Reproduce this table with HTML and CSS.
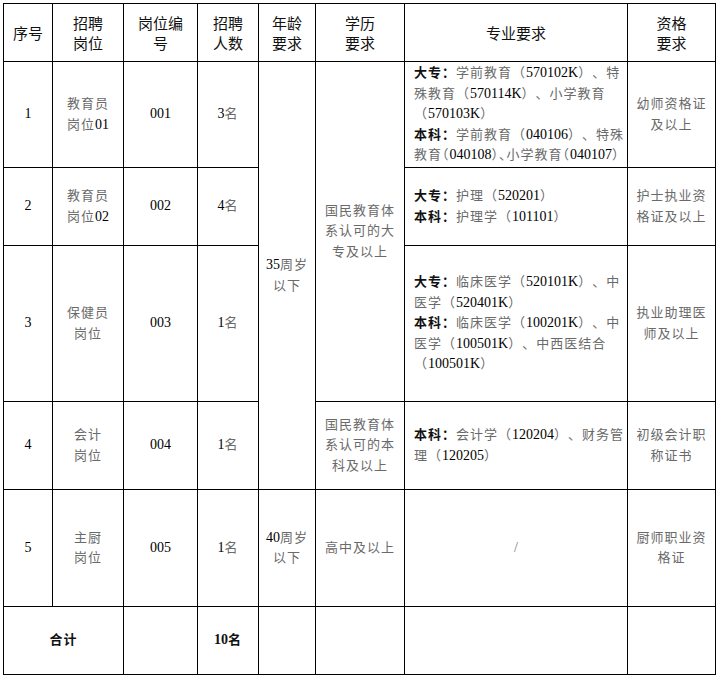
FILE: index.html
```html
<!DOCTYPE html>
<html lang="zh-CN">
<head>
<meta charset="utf-8">
<title>招聘岗位表</title>
<link rel="stylesheet" href="styles.css">
</head>
<body>
<table class="jobs">
  <colgroup>
    <col class="w-no"><col class="w-post"><col class="w-code"><col class="w-num">
    <col class="w-age"><col class="w-edu"><col class="w-major"><col class="w-qual">
  </colgroup>
  <tr class="r-head">
    <th>序号</th>
    <th>招聘<br>岗位</th>
    <th>岗位编<br>号</th>
    <th>招聘<br>人数</th>
    <th>年龄<br>要求</th>
    <th>学历<br>要求</th>
    <th>专业要求</th>
    <th>资格<br>要求</th>
  </tr>
  <tr class="r1">
    <td>1</td>
    <td><span class="z">教育员</span><br><span class="z">岗位</span>01</td>
    <td>001</td>
    <td>3<span class="z">名</span></td>
    <td rowspan="4">35<span class="z">周岁</span><br><span class="z">以下</span></td>
    <td rowspan="3"><span class="z">国民教育体</span><br><span class="z">系认可的大</span><br><span class="z">专及以上</span></td>
    <td class="major"><b>大专：</b><span class="z">学前教育（</span>570102K<span class="z">）、特</span><br><span class="z">殊教育（</span>570114K<span class="z">）、小学教育</span><br><span class="z">（</span>570103K<span class="z">）</span><br><b>本科：</b><span class="z">学前教育（</span>040106<span class="z">）、特殊</span><br><span class="z">教育<span class="h">（</span></span>040108<span class="z"><span class="h">）、</span>小学教育<span class="h">（</span></span>040107<span class="z"><span class="h">）</span></span></td>
    <td><span class="z">幼师资格证</span><br><span class="z">及以上</span></td>
  </tr>
  <tr class="r2">
    <td>2</td>
    <td><span class="z">教育员</span><br><span class="z">岗位</span>02</td>
    <td>002</td>
    <td>4<span class="z">名</span></td>
    <td class="major"><b>大专：</b><span class="z">护理（</span>520201<span class="z">）</span><br><b>本科：</b><span class="z">护理学（</span>101101<span class="z">）</span></td>
    <td><span class="z">护士执业资</span><br><span class="z">格证及以上</span></td>
  </tr>
  <tr class="r3">
    <td>3</td>
    <td><span class="z">保健员</span><br><span class="z">岗位</span></td>
    <td>003</td>
    <td>1<span class="z">名</span></td>
    <td class="major"><b>大专：</b><span class="z">临床医学（</span>520101K<span class="z">）、中</span><br><span class="z">医学（</span>520401K<span class="z">）</span><br><b>本科：</b><span class="z">临床医学（</span>100201K<span class="z">）、中</span><br><span class="z">医学（</span>100501K<span class="z">）、中西医结合</span><br><span class="z">（</span>100501K<span class="z">）</span></td>
    <td><span class="z">执业助理医</span><br><span class="z">师及以上</span></td>
  </tr>
  <tr class="r4">
    <td>4</td>
    <td><span class="z">会计</span><br><span class="z">岗位</span></td>
    <td>004</td>
    <td>1<span class="z">名</span></td>
    <td><span class="z">国民教育体</span><br><span class="z">系认可的本</span><br><span class="z">科及以上</span></td>
    <td class="major"><b>本科：</b><span class="z">会计学（</span>120204<span class="z">）、财务管</span><br><span class="z">理（</span>120205<span class="z">）</span></td>
    <td><span class="z">初级会计职</span><br><span class="z">称证书</span></td>
  </tr>
  <tr class="r5">
    <td>5</td>
    <td><span class="z">主厨</span><br><span class="z">岗位</span></td>
    <td>005</td>
    <td>1<span class="z">名</span></td>
    <td>40<span class="z">周岁</span><br><span class="z">以下</span></td>
    <td><span class="z">高中及以上</span></td>
    <td class="slash">/</td>
    <td><span class="z">厨师职业资</span><br><span class="z">格证</span></td>
  </tr>
  <tr class="r-total">
    <td colspan="2" class="strong"><b>合计</b></td>
    <td></td>
    <td class="strong"><b class="num">10</b><b>名</b></td>
    <td></td>
    <td></td>
    <td></td>
    <td></td>
  </tr>
</table>
</body>
</html>
```
FILE: styles.css
```css
html, body {
  margin: 0;
  padding: 0;
  background: #ffffff;
}

body {
  padding: 3px;
  font-family: "Liberation Serif", "Noto Sans CJK SC", serif;
  font-size: 14px;
  color: #000;
  text-spacing-trim: space-all;
}

.jobs {
  border-collapse: collapse;
  table-layout: fixed;
  width: 713px;
}

.w-no { width: 49px; }
.w-post { width: 71px; }
.w-code { width: 74px; }
.w-num { width: 61px; }
.w-age { width: 57px; }
.w-edu { width: 89px; }
.w-major { width: 223px; }
.w-qual { width: 88px; }

.jobs th,
.jobs td {
  border: 1px solid #000;
  padding: 0 4px;
  text-align: center;
  vertical-align: middle;
  line-height: 20.5px;
  white-space: nowrap;
}

.jobs th {
  font-family: "Noto Sans CJK SC", sans-serif;
  font-size: 15px;
  font-weight: 400;
  line-height: 20px;
  color: #111;
}

.r-head { height: 58px; }
.r1 { height: 106px; }
.r2 { height: 78px; }
.r3 { height: 156px; }
.r4 { height: 88px; }
.r5 { height: 117px; }
.r-total { height: 68px; }

.z {
  font-family: "Noto Sans CJK SC", sans-serif;
  font-size: 13px;
  line-height: 1;
  letter-spacing: 1px;
  color: #6a6a6a;
  text-spacing-trim: space-all;
}

.h {
  font-feature-settings: "halt";
}

.jobs b {
  font-family: "Noto Sans CJK SC", sans-serif;
  font-size: 13px;
  line-height: 1;
  letter-spacing: 1px;
  font-weight: 700;
  color: #111;
}

.jobs b.num {
  font-family: "Liberation Serif", serif;
  font-size: 14px;
  letter-spacing: 0;
}

.jobs td.major {
  text-align: left;
  padding-left: 9px;
  padding-right: 2px;
}

.jobs td.slash {
  color: #777;
}
```
